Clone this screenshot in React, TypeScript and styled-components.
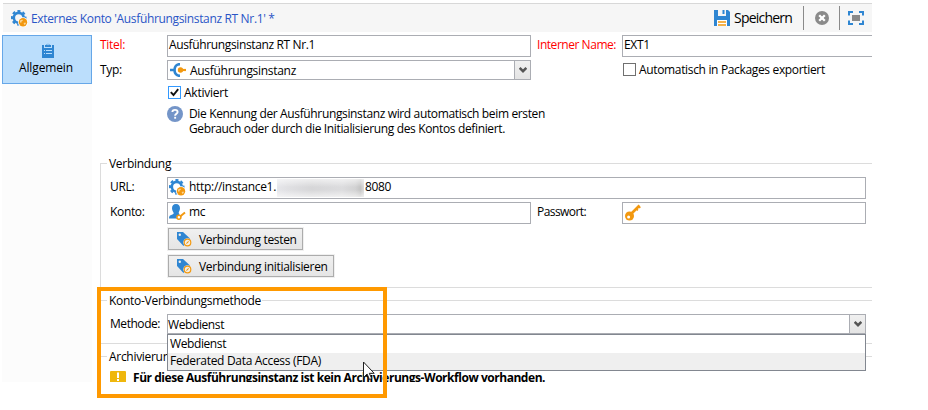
import React from 'react';
import styled, { createGlobalStyle, css } from 'styled-components';

const BLUE = '#2f86d2';
const ORANGE = '#f2980f';

const GlobalStyle = createGlobalStyle`
  * { box-sizing: border-box; }
  body { margin: 0; background: #fff; overflow: hidden; }
  svg { display: block; flex: none; }
`;

/* ---------- window ---------- */

const Window = styled.div`
  position: relative;
  width: 872px;
  height: 410px;
  padding: 3px 0 0 2px;
  color: #000;
  font: 12px/15px 'Open Sans', 'Noto Sans', sans-serif;
  white-space: nowrap;
`;

const Text = styled.span<{ $track?: number }>`
  display: block;
  letter-spacing: ${(p) => p.$track ?? -0.34}px;
`;

const Header = styled.header`
  display: flex;
  align-items: center;
  height: 29px;
  margin-left: 1px;
  padding-left: 8px;
  border-top: 1px solid #d8d8d8;
  background: #f6f6f6;
`;

const Title = styled.h1`
  flex: 1;
  margin: 0 0 0 3px;
  color: #2a55c6;
  font: inherit;
  letter-spacing: -0.34px;
`;

const Tool = styled.button<{ $width: number }>`
  display: flex;
  align-items: center;
  gap: 4px;
  width: ${(p) => p.$width}px;
  height: 24px;
  padding: 0;
  border: 0;
  background: none;
  color: #000;
  font: 14px/20px 'Open Sans', sans-serif;
  letter-spacing: -0.78px;
`;

const ToolInset = styled.span`
  margin: 0 auto;
`;

const Separator = styled.i`
  width: 1px;
  height: 24px;
  background: #8a8a8a;
`;

const Main = styled.main`
  display: flex;
  height: 347px;
  margin-top: 3px;
`;

const Sidebar = styled.nav`
  width: 90px;
  background: #fcfcfc;
`;

const NavItem = styled.div`
  display: flex;
  flex-direction: column;
  align-items: center;
  gap: 2px;
  height: 49px;
  padding: 6px 2px 0 0;
  border: 1px solid #66a7e8;
  background: #bbdefc;

  svg { margin-left: 4px; }
`;

/* ---------- form ---------- */

const Form = styled.form`
  flex: 1;
  min-width: 0;
  overflow: hidden;
`;

const Row = styled.div<{ $top?: number; $height?: number }>`
  display: flex;
  height: ${(p) => p.$height ?? 22}px;
  margin-top: ${(p) => p.$top ?? 3}px;
`;

const Indent = styled.span<{ $wide?: boolean }>`
  flex: none;
  width: ${(p) => (p.$wide ? 75 : 8)}px;
`;

const Label = styled.label<{ $width: number; $required?: boolean; $track?: number }>`
  flex: none;
  width: ${(p) => p.$width}px;
  padding-top: 2px;
  color: ${(p) => (p.$required ? '#ff0000' : '#000')};
  letter-spacing: ${(p) => p.$track ?? -0.34}px;
`;

const boxed = css`
  flex: none;
  border: 1px solid #abadb3;
  background: #fff;
`;

const Field = styled.div<{ $width: number; $cut?: boolean }>`
  ${boxed}
  display: flex;
  align-items: flex-start;
  gap: 3px;
  width: ${(p) => p.$width}px;
  margin-right: 6px;
  padding: 1px 2px 0 1px;
  ${(p) => p.$cut && 'border-right: 0; margin-right: 0;'}
`;

const Combo = styled.div<{ $width: number; $pad: number }>`
  ${boxed}
  position: relative;
  display: flex;
  align-items: center;
  gap: 3px;
  width: ${(p) => p.$width}px;
  padding-left: ${(p) => p.$pad}px;
`;

const ComboButton = styled.span`
  display: grid;
  place-items: center;
  width: 16px;
  height: 18px;
  margin-left: auto;
  border-left: 1px solid #abadb3;
  background: linear-gradient(#f0f0f0, #e4e4e4);
`;

const Check = styled.span<{ $on?: boolean }>`
  display: grid;
  place-items: center;
  width: 13px;
  height: 13px;
  margin: 1px 3px 0 1px;
  border: 1px solid ${(p) => (p.$on ? '#3399ff' : '#707070')};
  background: #fff;
`;

const CheckLine = styled.div`
  display: flex;
  margin: 2px 0 0 91px;
`;

const Hint = styled.div`
  display: flex;
  gap: 6px;
  height: 34px;
  margin: 5px 0 0 75px;
`;

const Masked = styled.span`
  width: 87px;
  height: 18px;
  margin: 0 -2px 0 -2px;
  background:
    linear-gradient(#fff9 0, #fff0 45%, #fff0 60%, #fff9 100%),
    linear-gradient(90deg, #e6e6ea 0, #e0e0e3 12%, #d6d6d8 40%, #dcdcde 75%, #d2d2d3 90%, #c4c4c4 96%, #dadada 100%);
`;

/* ---------- groups ---------- */

const Group = styled.section<{ $height: number; $top: number }>`
  height: ${(p) => p.$height}px;
  margin: ${(p) => p.$top}px 0 0 8px;
  padding-left: 9px;
  border: solid #dcdcdc;
  border-width: 1px 0 1px 1px;
`;

const Legend = styled.h2<{ $track?: number }>`
  width: fit-content;
  height: 15px;
  margin: -8px 0 6px -3px;
  padding: 0 1px 0 2px;
  background: #fff;
  font: inherit;
  letter-spacing: ${(p) => p.$track ?? -0.3}px;
`;

const ActionButton = styled.button<{ $width: number }>`
  display: flex;
  align-items: center;
  gap: 7px;
  width: ${(p) => p.$width}px;
  height: 22px;
  margin: 4px 0 5px 58px;
  padding: 0 0 0 7px;
  border: 1px solid #acacac;
  outline: 1px solid #f0f0f0;
  background: linear-gradient(#f0f0f0, #e5e5e5);
  color: #000;
  font: inherit;
`;

const Options = styled.ul`
  position: absolute;
  z-index: 1;
  top: 19px;
  left: -1px;
  width: 699px;
  height: 37px;
  margin: 0;
  padding: 1px 0 0;
  border: 1px solid #828790;
  background: #fff;
  list-style: none;
`;

const Option = styled.li<{ $hover?: boolean; $track: number }>`
  height: 17px;
  padding-left: 2px;
  background: ${(p) => (p.$hover ? '#efefef' : '#fff')};
  letter-spacing: ${(p) => p.$track}px;
`;

const Warning = styled.p`
  display: flex;
  gap: 7px;
  margin: 5px 0 0;
  font-weight: 700;
`;

/* ---------- overlays ---------- */

const Highlight = styled.div`
  position: absolute;
  z-index: 3;
  top: 287px;
  left: 97px;
  width: 290px;
  height: 111px;
  border: 4px solid #ff9900;
`;

const Pointer = styled.svg`
  position: absolute;
  z-index: 2;
  top: 361px;
  left: 362px;
`;

/* ---------- icons ---------- */

const GearIcon = () => (
  <svg width="17" height="17" viewBox="0 0 17 17">
    <circle cx="7.7" cy="7.800" r="4.900" fill="none" stroke={BLUE} strokeWidth="2.600" />
    <circle cx="7.700" cy="7.800" r="6.700" fill="none" stroke={BLUE} strokeWidth="2.200" strokeDasharray="3 2.262" strokeDashoffset="1.500" />
    <circle cx="12" cy="12.200" r="5" fill="#fff" />
    <circle cx="12" cy="12.200" r="4.200" fill={ORANGE} />
    <path d="M9 10.400l2.300-.8.6 1.200-1.400.8-.3 1.500-1.200-.9zM12.600 13l1.900-.6.4 1.300-1.500 1.300z" fill="#fbd596" />
  </svg>
);

const ClipboardIcon = () => (
  <svg width="12" height="16" viewBox="0 0 12 16">
    <path d="M0 3h2v3h8V3h2v13H0z" fill={BLUE} />
    <path d="M3 5V3h1.300a1.800 1.800 0 0 1 3.400 0H9v2z" fill={BLUE} />
    <circle cx="6" cy="2.400" r=".8" fill="#bbdefc" />
    <path d="M2 8.500h1M4 8.500h6M2 11.500h1M4 11.500h6" stroke="#bbdefc" />
  </svg>
);

const SaveIcon = () => (
  <svg width="16" height="16" viewBox="0 0 16 16">
    <path d="M0 0h4v6h8V0h2l2 2v14H0z" fill={BLUE} />
    <path d="M5 0h6v5H5z" fill="#f6f6f6" />
    <path d="M8.500 0h2v4h-2z" fill={BLUE} />
    <path d="M3 10h10v6H3z" fill="#fff" />
    <path d="M4 12h8M4 15h8" stroke={ORANGE} strokeWidth="1.400" />
  </svg>
);

const CancelIcon = () => (
  <svg width="14" height="14" viewBox="0 0 14 14">
    <circle cx="7" cy="7" r="7" fill="#8a8a8a" />
    <path d="M4.200 4.200l5.600 5.600M9.800 4.200L4.200 9.800" stroke="#fff" strokeWidth="2.300" />
  </svg>
);

const ExpandIcon = () => (
  <svg width="16" height="14" viewBox="0 0 16 14">
    <path d="M1 4.500V1h4M11 1h4v3.500M15 9.500V13h-4M5 13H1V9.500" fill="none" stroke={BLUE} strokeWidth="2" />
    <path d="M4 4h8v6H4z" fill="#8a8a8a" />
  </svg>
);

const InstanceIcon = () => (
  <svg width="17" height="14" viewBox="0 0 17 14">
    <path d="M0 7h4M10 1.200C6.500 1.200 4.500 4 4.500 7S6.500 12.800 10 12.800" fill="none" stroke={BLUE} strokeWidth="2.700" />
    <path d="M9 7h7" stroke={ORANGE} strokeWidth="2.200" />
    <circle cx="10.500" cy="7" r="2.700" fill={ORANGE} />
  </svg>
);

const HelpIcon = () => (
  <svg width="16" height="16" viewBox="0 0 16 16">
    <circle cx="8" cy="8" r="8" fill="#7495c8" />
    <path d="M5.400 6Q5.400 3.900 8 3.900T10.600 6C10.600 7.700 8.100 7.700 8.100 9.700" fill="none" stroke="#fff" strokeWidth="1.900" />
    <path d="M7.200 10.800h1.900v1.900H7.200z" fill="#fff" />
  </svg>
);

const UserIcon = () => (
  <svg width="17" height="16" viewBox="0 0 17 16">
    <path d="M7 0c2.700 0 4 1.700 4 4.300 0 2-1 3.200-1.300 4.200-.2 1 .9 1.600 1.800 2.100L9 14.500H0c0-2.500 1-3.200 2.800-3.700C4.600 10.200 5 9.600 4.500 8.500 4 7.500 3 6.300 3 4.300 3 1.700 4.300 0 7 0z" fill={BLUE} />
    <path d="M10 13.200l6-5" stroke="#fff" strokeWidth="3.500" />
    <path d="M10.500 12.900l5.500-4.500" stroke={ORANGE} strokeWidth="1.900" />
    <circle cx="9.900" cy="13.200" r="2" fill="#fff" stroke={ORANGE} strokeWidth="1.500" />
  </svg>
);

const KeyIcon = () => (
  <svg width="17" height="17" viewBox="0 0 17 17">
    <path d="M6.500 10.500L15.500 1.500" stroke={ORANGE} strokeWidth="2.600" />
    <path d="M12 4.500l1.900 1.900M14 2l2.300 1.800" stroke={ORANGE} strokeWidth="1.700" />
    <circle cx="5.500" cy="12" r="4.500" fill={ORANGE} />
    <circle cx="4.600" cy="13" r="1.500" fill="#fff" />
  </svg>
);

const TagIcon = () => (
  <svg width="16" height="16" viewBox="0 0 16 16">
    <path d="M1 1h6l7 6.500-6.500 7.500L1 8z" fill={BLUE} />
    <circle cx="3.800" cy="3.800" r="1.200" fill="#eee" />
    <circle cx="11.500" cy="11.500" r="4.200" fill="#ececec" />
    <circle cx="11.500" cy="11.500" r="3.300" fill="#f5eee1" stroke={ORANGE} strokeWidth="1.200" />
    <path d="M13.200 9.800l-1.300 2.100-2.100 1.300 1.300-2.100z" fill={ORANGE} />
  </svg>
);

const WarningIcon = () => (
  <svg width="16" height="16" viewBox="0 0 16 16">
    <rect y="1" width="16" height="14" rx="1" fill="#efb70d" />
    <path d="M7 2.500h2V8H7zM7 9h2v2H7z" fill="#fff" />
  </svg>
);

const Chevron = () => (
  <svg width="8" height="6" viewBox="0 0 8 6">
    <path d="M.7.900L4 4.200 7.300.900" fill="none" stroke="#555" strokeWidth="2.400" />
  </svg>
);

const CheckMark = () => (
  <svg width="9" height="9" viewBox="0 0 9 9">
    <path d="M.8 4.200L3.500 7 8.200 1.200" fill="none" stroke="#111" strokeWidth="1.900" />
  </svg>
);

/* ---------- page ---------- */

const App = () => (
  <>
    <GlobalStyle />
    <Window>
      <Header>
        <GearIcon />
        <Title>Externes Konto 'Ausführungsinstanz RT Nr.1' *</Title>
        <Tool $width={89}><SaveIcon />Speichern</Tool>
        <Separator />
        <Tool $width={35}><ToolInset><CancelIcon /></ToolInset></Tool>
        <Separator />
        <Tool $width={32}><ToolInset><ExpandIcon /></ToolInset></Tool>
      </Header>
      <Main>
        <Sidebar>
          <NavItem>
            <ClipboardIcon />
            <Text $track={-0.13}>Allgemein</Text>
          </NavItem>
        </Sidebar>
        <Form>
          <Row $top={0}>
            <Indent />
            <Label $width={67} $required $track={-0.3}>Titel:</Label>
            <Field $width={364}><Text $track={-0.366}>Ausführungsinstanz RT Nr.1</Text></Field>
            <Label $width={85} $required $track={-0.46}>Interner Name:</Label>
            <Field $width={250} $cut><Text>EXT1</Text></Field>
          </Row>
          <Row $height={20}>
            <Indent />
            <Label $width={67}>Typ:</Label>
            <Combo $width={364} $pad={2}>
              <InstanceIcon />
              <Text $track={-0.295}>Ausführungsinstanz</Text>
              <ComboButton><Chevron /></ComboButton>
            </Combo>
            <CheckLine>
              <Check />
              <Text>Automatisch in Packages exportiert</Text>
            </CheckLine>
          </Row>
          <Row $top={5} $height={16}>
            <Indent $wide />
            <Check $on><CheckMark /></Check>
            <Text $track={-0.24}>Aktiviert</Text>
          </Row>
          <Hint>
            <HelpIcon />
            <div>
              <Text $track={-0.359}>Die Kennung der Ausführungsinstanz wird automatisch beim ersten</Text>
              <Text $track={-0.355}>Gebrauch oder durch die Initialisierung des Kontos definiert.</Text>
            </div>
          </Hint>

          <Group $top={23} $height={125}>
            <Legend>Verbindung</Legend>
            <Row $top={0}>
              <Label $width={57}>URL:</Label>
              <Field $width={699}>
                <GearIcon />
                <Text $track={-0.3}>http://instance1.</Text>
                <Masked />
                <Text>8080</Text>
              </Field>
            </Row>
            <Row>
              <Label $width={57}>Konto:</Label>
              <Field $width={364}><UserIcon /><Text>mc</Text></Field>
              <Label $width={85} $track={-0.57}>Passwort:</Label>
              <Field $width={244}><KeyIcon /></Field>
            </Row>
            <ActionButton $width={135}><TagIcon /><Text $track={-0.34}>Verbindung testen</Text></ActionButton>
            <ActionButton $width={166}><TagIcon /><Text $track={-0.3}>Verbindung initialisieren</Text></ActionButton>
          </Group>

          <Group $top={12} $height={44}>
            <Legend $track={-0.287}>Konto-Verbindungsmethode</Legend>
            <Row $top={0} $height={20}>
              <Label $width={57} $track={-0.45}>Methode:</Label>
              <Combo $width={699} $pad={0}>
                <Text $track={-0.4}>Webdienst</Text>
                <ComboButton><Chevron /></ComboButton>
                <Options>
                  <Option $track={-0.4}>Webdienst</Option>
                  <Option $hover $track={-0.313}>Federated Data Access (FDA)</Option>
                </Options>
              </Combo>
            </Row>
          </Group>

          <Group $top={12} $height={60}>
            <Legend>Archivierungen</Legend>
            <Warning>
              <WarningIcon />
              <Text $track={-0.46}>Für diese Ausführungsinstanz ist kein Archivierungs-Workflow vorhanden.</Text>
            </Warning>
          </Group>
        </Form>
      </Main>
      <Highlight />
      <Pointer width="13" height="20" viewBox="0 0 13 20">
        <path d="M1.500 1v15.500l3.600-3.500 2.400 5.500 2.200-1-2.400-5.200h4.900z" fill="#fff" stroke="#222" />
      </Pointer>
    </Window>
  </>
);

export default App;
